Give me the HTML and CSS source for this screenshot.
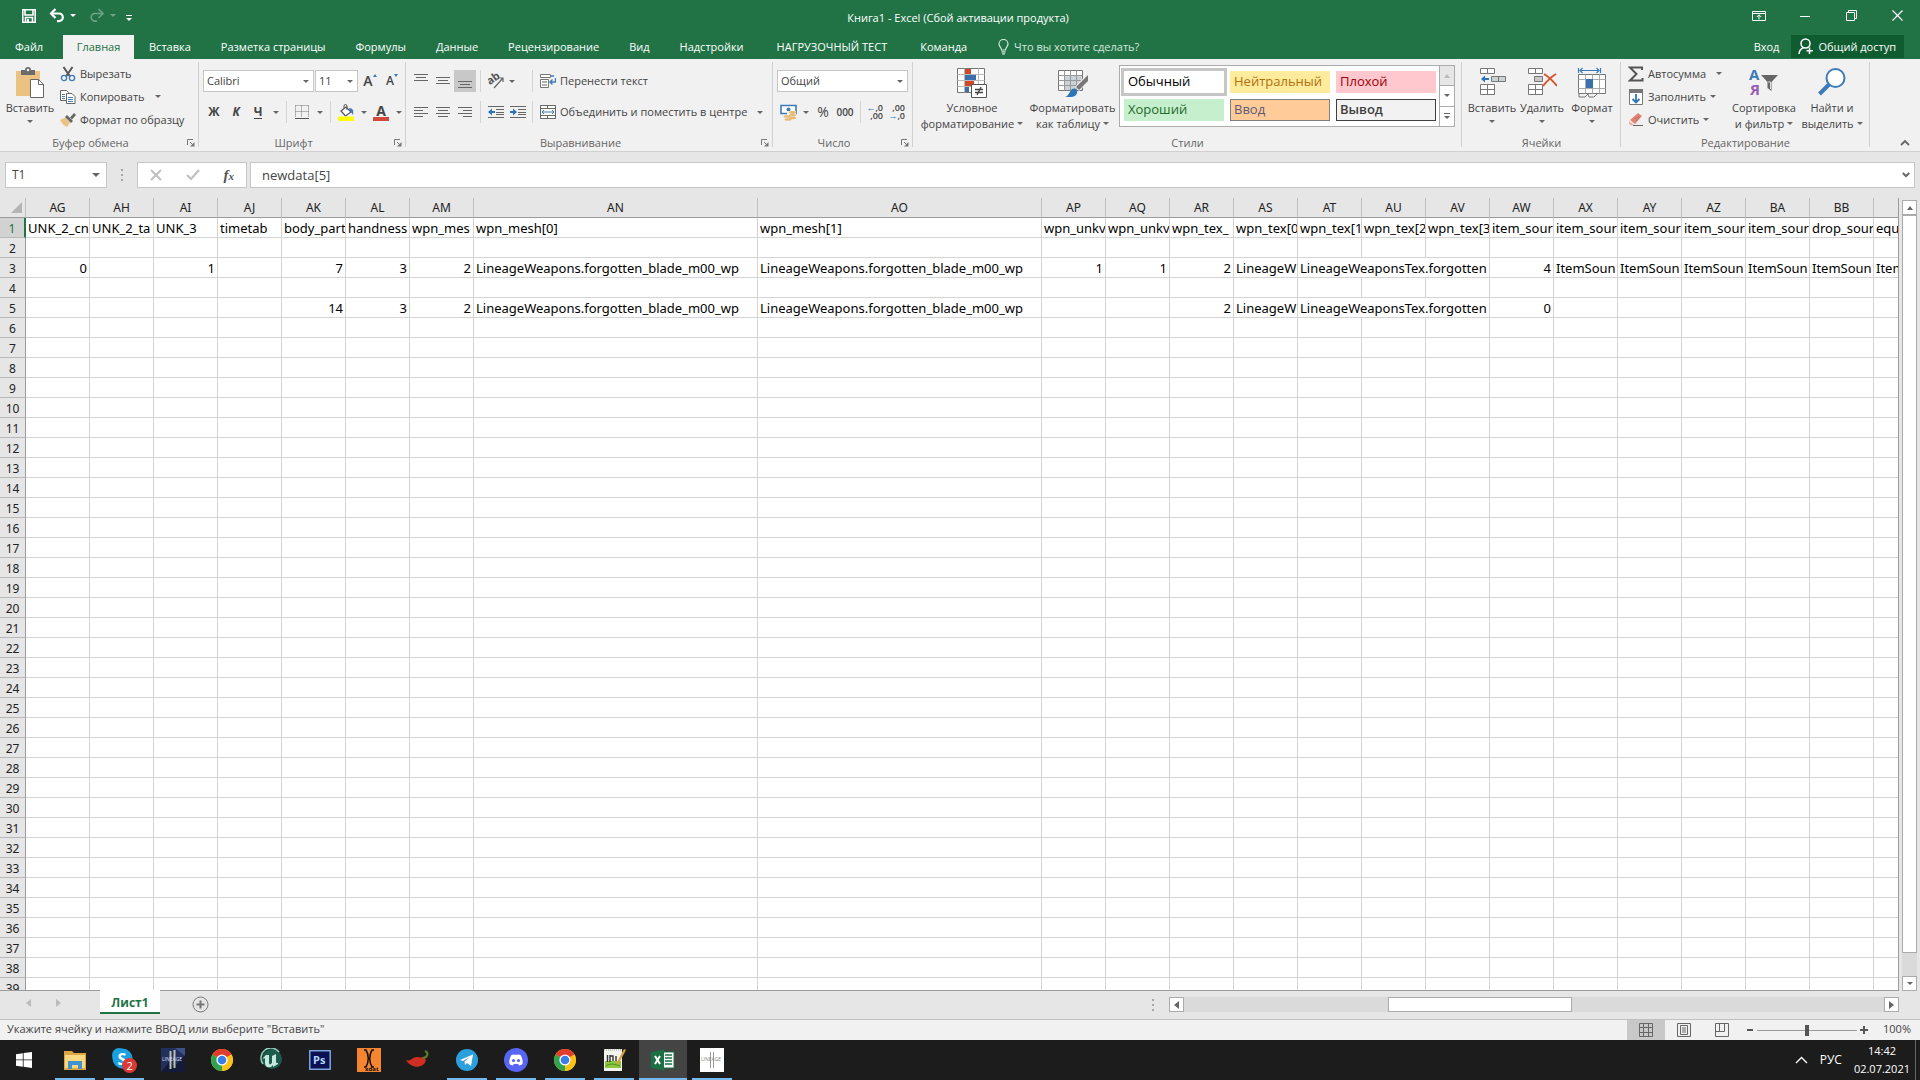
FILE: index.html
```html
<!DOCTYPE html>
<html lang="ru">
<head>
<meta charset="utf-8">
<title>Книга1 - Excel</title>
<link rel="stylesheet" href="styles.css">
</head>
<body>
<header class="titlebar">
  <div class="quick">
    <button class="qbtn" aria-label="Сохранить"><svg width="16" height="16" viewBox="0 0 16 16"><path d="M1.8 1.8h12.4v12.4H1.8z M4 2v5h8V2 M4.5 14v-4.500h7V14" fill="none" stroke="#fff" stroke-width="1.6"/><path d="M6 11h2v3H6z" fill="#fff"/></svg></button>
    <button class="qbtn" aria-label="Отменить"><svg width="16" height="16" viewBox="0 0 16 16"><path d="M2 5.500h8a3.800 3.800 0 0 1 0 7.600H8" fill="none" stroke="#fff" stroke-width="2.200"/><path d="M6.500 1L2 5.500L6.500 10" fill="none" stroke="#fff" stroke-width="2.200"/></svg></button>
    <button class="qarrow" aria-label="Список отмены"><i class="caret light"></i></button>
    <button class="qbtn dim" aria-label="Вернуть"><svg width="16" height="16" viewBox="0 0 16 16"><path d="M14 5.500H6a3.800 3.800 0 0 0 0 7.600h2" fill="none" stroke="#fff" stroke-width="1.600"/><path d="M9.500 1L14 5.500L9.500 10" fill="none" stroke="#fff" stroke-width="1.600"/></svg></button>
    <button class="qarrow dim" aria-label="Список возврата"><i class="caret light"></i></button>
    <button class="qarrow more" aria-label="Настройка панели"><i class="bar"></i><i class="caret light"></i></button>
  </div>
  <h1 class="doc-title">Книга1 - Excel (Сбой активации продукта)</h1>
  <div class="winbtns">
    <button aria-label="Параметры ленты"><svg width="14" height="12" viewBox="0 0 14 12" fill="none" stroke="#fff"><path d="M.5 1.500h13v9H.5z M.5 3.500h13 M7 9.500V5 M4.800 7L7 4.800L9.200 7"/></svg></button>
    <button aria-label="Свернуть"><svg width="10" height="10" viewBox="0 0 10 10"><path d="M0 5.500h10" stroke="#fff"/></svg></button>
    <button aria-label="Восстановить"><svg width="11" height="11" viewBox="0 0 11 11" fill="none" stroke="#fff"><path d="M.5 2.500h8v8h-8z M2.500 2.500v-2h8v8h-2"/></svg></button>
    <button aria-label="Закрыть"><svg width="11" height="11" viewBox="0 0 11 11"><path d="M.5 .5l10 10M10.500 .5l-10 10" stroke="#fff" stroke-width="1.200"/></svg></button>
  </div>
</header>

<nav class="tabs">
  <a class="tab file" href="#">Файл</a>
  <a class="tab active" href="#">Главная</a>
  <a class="tab" href="#">Вставка</a>
  <a class="tab" href="#">Разметка страницы</a>
  <a class="tab" href="#">Формулы</a>
  <a class="tab" href="#">Данные</a>
  <a class="tab" href="#">Рецензирование</a>
  <a class="tab" href="#">Вид</a>
  <a class="tab" href="#">Надстройки</a>
  <a class="tab wide" href="#">НАГРУЗОЧНЫЙ ТЕСТ</a>
  <a class="tab" href="#">Команда</a>
  <a class="tab tell" href="#"><svg width="11" height="16" viewBox="0 0 11 16" fill="none" stroke="#d7e8dd" stroke-width="1.200"><path d="M3.500 11C3.500 8.500 1 7.800 1 5a4.500 4.500 0 0 1 9 0c0 2.800-2.500 3.500-2.500 6z M3.500 12.800h4 M4 14.800h3"/></svg>Что вы хотите сделать?</a>
  <a class="tab signin" href="#">Вход</a>
  <button class="share"><svg width="16" height="17" viewBox="0 0 16 17" fill="none" stroke="#fff" stroke-width="1.500"><circle cx="7.500" cy="5.500" r="4.500"/><path d="M1 16c.3-3.500 2-5.500 4.500-6.300M11.500 9.500v6.500M8.500 12.800h6.500"/></svg>Общий доступ</button>
</nav>

<section class="ribbon">
  <div class="group g-clip">
    <div class="body">
      <button class="big paste">
        <svg width="30" height="31" viewBox="0 0 30 31"><path d="M1 4h24v25H1z" fill="#eac282"/><path d="M6 3h4a3 3 0 0 1 6 0h4v5H6z" fill="#6b6b6b"/><circle cx="13" cy="3" r="1.300" fill="#f1f1f1"/><path d="M15.500 12.500h8l5 5v13h-13z" fill="#fff" stroke="#666"/><path d="M23.500 12.500v5h5" fill="none" stroke="#666"/></svg>
        <span>Вставить</span><i class="caret"></i>
      </button>
      <div class="stack">
        <button class="small"><svg width="16" height="16" viewBox="0 0 16 16" fill="none"><path d="M3.500 1l6.500 9.500M12.500 1L6 10.500" stroke="#555" stroke-width="2"/><circle cx="4" cy="12" r="2.600" stroke="#3c7ab8" stroke-width="1.300"/><circle cx="12" cy="12" r="2.600" stroke="#3c7ab8" stroke-width="1.300"/></svg>Вырезать</button>
        <button class="small"><svg width="16" height="16" viewBox="0 0 16 16" fill="#fff" stroke="#666"><path d="M.5 1.500h6l2 2v8h-8z"/><path d="M6.500 4.500h5.500l3 3v7H6.500z"/><path d="M2 5.500h3M2 7.500h3M2 9.500h3M8 8.500h5M8 10.500h5M8 12.500h5" stroke="#4a82b8"/></svg>Копировать<i class="caret far"></i></button>
        <button class="small"><svg width="16" height="16" viewBox="0 0 16 16"><path d="M0 8l5-2.500 5 5L7 15c-3-1-5-3.500-7-7z" fill="#eac282"/><path d="M5 5l2-2 6 6-2 2z" fill="#666"/><path d="M10 5.500L14 1l2 2-4 4.500z" fill="#666"/></svg>Формат по образцу</button>
      </div>
    </div>
    <div class="foot"><span>Буфер обмена</span><button class="launch" aria-label="Параметры буфера"><svg width="8" height="8" viewBox="0 0 8 8"><path d="M.5 6V.5H6M3 3l3 3" fill="none" stroke="#777"/><path d="M7.500 3v4.500H3z" fill="#777"/></svg></button></div>
  </div>

  <div class="group g-font">
    <div class="body rows">
      <div class="row">
        <span class="combo w-font"><select aria-label="Шрифт"><option>Calibri</option></select><i class="caret"></i></span>
        <span class="combo w-size"><select aria-label="Размер"><option>11</option></select><i class="caret"></i></span>
        <button class="ib w22" aria-label="Увеличить шрифт"><b class="letter">A</b><i class="tri up"></i></button>
        <button class="ib w22" aria-label="Уменьшить шрифт"><b class="letter sm">A</b><i class="tri"></i></button>
      </div>
      <div class="row">
        <button class="ib w22"><b>Ж</b></button>
        <button class="ib w22"><b><em>К</em></b></button>
        <button class="ib w22"><b class="under">Ч</b></button>
        <button class="ib w13" aria-label="Подчеркивание"><i class="caret"></i></button>
        <i class="sep"></i>
        <button class="ib w22" aria-label="Границы"><svg width="14" height="14" viewBox="0 0 14 14" fill="none" stroke="#777"><path d="M.5 .5h13M.5 6.500h13M.5 .5v12M6.500 .5v12M13.500 .5v12" stroke-dasharray="1 1"/><path d="M0 13.500h14" stroke="#555"/></svg></button>
        <button class="ib w13" aria-label="Виды границ"><i class="caret"></i></button>
        <i class="sep"></i>
        <button class="ib w22" aria-label="Заливка"><svg width="17" height="17" viewBox="0 0 17 17"><path d="M3 7l5-4 5 5-5.500 4z" fill="#fff" stroke="#555" stroke-width="1.200"/><path d="M6 5V2a1.500 1.500 0 0 1 3 0v4" fill="none" stroke="#555"/><path d="M11 4c4 0 5 3 4 7-1-2-2-3-3-3.500z" fill="#3c7ab8"/><path d="M0 12.500h16V17H0z" fill="#ff0"/></svg></button>
        <button class="ib w13" aria-label="Цвета заливки"><i class="caret"></i></button>
        <button class="ib w22" aria-label="Цвет текста"><b class="fontcolor">A</b></button>
        <button class="ib w13" aria-label="Цвета текста"><i class="caret"></i></button>
      </div>
    </div>
    <div class="foot"><span>Шрифт</span><button class="launch" aria-label="Параметры шрифта"><svg width="8" height="8" viewBox="0 0 8 8"><path d="M.5 6V.5H6M3 3l3 3" fill="none" stroke="#777"/><path d="M7.500 3v4.500H3z" fill="#777"/></svg></button></div>
  </div>

  <div class="group g-align">
    <div class="body rows">
      <div class="row">
        <button class="ib w22" aria-label="По верхнему краю"><svg width="14" height="14" viewBox="0 0 14 14" stroke="#666"><path d="M0 .5h14M2 3.500h10M0 6.500h14"/></svg></button>
        <button class="ib w22" aria-label="По середине"><svg width="14" height="14" viewBox="0 0 14 14" stroke="#666"><path d="M0 3.500h14M2 6.500h10M0 9.500h14"/></svg></button>
        <button class="ib w22 on" aria-label="По нижнему краю"><svg width="14" height="14" viewBox="0 0 14 14" stroke="#666"><path d="M0 7.500h14M2 10.500h10M0 13.500h14"/></svg></button>
        <i class="sep"></i>
        <button class="ib w22" aria-label="Ориентация"><svg width="17" height="16" viewBox="0 0 17 16"><text x="0" y="9" font-size="11" font-weight="bold" fill="#555" transform="rotate(-35 6 8)">ab</text><path d="M6 15L15 5M11.500 5H15v4" fill="none" stroke="#666" stroke-width="1.200"/></svg></button>
        <button class="ib w10" aria-label="Виды ориентации"><i class="caret"></i></button>
        <i class="sep s2"></i>
        <button class="small txt"><svg width="16" height="16" viewBox="0 0 16 16" fill="none"><path d="M.5 1.500h10v3H.5zM.5 6.500h8v8h-8z" fill="#fff" stroke="#777"/><path d="M2 9h5M2 12h5" stroke="#666"/><path d="M11 3h3M15.500 5v4H10M12.500 6.500L10 9l2.500 2.500" stroke="#3c7ab8" stroke-width="1.400"/></svg>Перенести текст</button>
      </div>
      <div class="row">
        <button class="ib w22" aria-label="По левому краю"><svg width="14" height="12" viewBox="0 0 14 12" stroke="#666"><path d="M0 1.500h14M0 4.500h9M0 7.500h14M0 10.500h9"/></svg></button>
        <button class="ib w22" aria-label="По центру"><svg width="14" height="12" viewBox="0 0 14 12" stroke="#666"><path d="M0 1.500h14M2 4.500h10M0 7.500h14M2 10.500h10"/></svg></button>
        <button class="ib w22" aria-label="По правому краю"><svg width="14" height="12" viewBox="0 0 14 12" stroke="#666"><path d="M0 1.500h14M5 4.500h9M0 7.500h14M5 10.500h9"/></svg></button>
        <i class="sep"></i>
        <button class="ib w22" aria-label="Уменьшить отступ"><svg width="16" height="14" viewBox="0 0 16 14"><path d="M0 1.500h16M8 4.500h8M8 7.500h8M8 9.500h8M0 12.500h16" stroke="#666"/><path d="M0 7l4-3.500V6h3v2H4v2.500z" fill="#2e75b6"/></svg></button>
        <button class="ib w22" aria-label="Увеличить отступ"><svg width="16" height="14" viewBox="0 0 16 14"><path d="M0 1.500h16M8 4.500h8M8 7.500h8M8 9.500h8M0 12.500h16" stroke="#666"/><path d="M7 7L3 3.500V6H0v2h3v2.500z" fill="#2e75b6"/></svg></button>
        <i class="sep s3"></i>
        <button class="small txt"><svg width="16" height="16" viewBox="0 0 16 16" fill="none"><path d="M.5 1.500h15v13H.5z" fill="#fff" stroke="#666"/><path d="M.5 4.500h15M.5 11.500h15M7.500 1v3M7.500 12v3" stroke="#666"/><path d="M2 8h12M4 6L2 8l2 2M12 6l2 2-2 2" stroke="#3c7ab8"/></svg>Объединить и поместить в центре<i class="caret far"></i></button>
      </div>
    </div>
    <div class="foot"><span>Выравнивание</span><button class="launch" aria-label="Параметры выравнивания"><svg width="8" height="8" viewBox="0 0 8 8"><path d="M.5 6V.5H6M3 3l3 3" fill="none" stroke="#777"/><path d="M7.500 3v4.500H3z" fill="#777"/></svg></button></div>
  </div>

  <div class="group g-num">
    <div class="body rows">
      <div class="row"><span class="combo w-num"><select aria-label="Числовой формат"><option>Общий</option></select><i class="caret"></i></span></div>
      <div class="row">
        <button class="ib w22" aria-label="Финансовый формат"><svg width="17" height="17" viewBox="0 0 17 17"><path d="M1 1.500h15v8H1z" fill="#fff" stroke="#3c7ab8" stroke-width="1.600"/><circle cx="8.500" cy="5.500" r="2" fill="#3c7ab8"/><path d="M7 7h9v9H4v-4h3z" fill="#f1f1f1"/><g fill="#eab970"><ellipse cx="12.500" cy="8.500" rx="3.500" ry="1.400"/><ellipse cx="12.500" cy="11.300" rx="3.500" ry="1.200"/><ellipse cx="12.500" cy="14" rx="3.500" ry="1.200"/><ellipse cx="7" cy="12.500" rx="3.300" ry="1.200"/><ellipse cx="8" cy="15.500" rx="3.500" ry="1.200"/></g></svg></button>
        <button class="ib w13" aria-label="Виды валют"><i class="caret"></i></button>
        <button class="ib w22 pct">%</button>
        <button class="ib w22 tiny">000</button>
        <i class="sep"></i>
        <button class="ib w22 dec" aria-label="Увеличить разрядность"><span><i>←</i>,0</span><span>,00</span></button>
        <button class="ib w22 dec" aria-label="Уменьшить разрядность"><span>,00</span><span><i>→</i>,0</span></button>
      </div>
    </div>
    <div class="foot"><span>Число</span><button class="launch" aria-label="Параметры числа"><svg width="8" height="8" viewBox="0 0 8 8"><path d="M.5 6V.5H6M3 3l3 3" fill="none" stroke="#777"/><path d="M7.500 3v4.500H3z" fill="#777"/></svg></button></div>
  </div>

  <div class="group g-style">
    <div class="body">
      <button class="big w-cond">
        <svg width="30" height="31" viewBox="0 0 30 31"><path d="M.5 1.500h27v24H.5z" fill="#fff" stroke="#777"/><path d="M.5 7.500h27M.5 13.500h27M.5 19.500h27M7.500 1.500v24M21.500 1.500v24" stroke="#bbb" fill="none"/><path d="M8 2h6v5H8zM8 14h9v5H8z" fill="#d24726"/><path d="M8 8h11v5H8zM8 20h4v5H8z" fill="#3c6fae"/><path d="M14.500 17.500h15v13h-15z" fill="#fff" stroke="#555"/><path d="M18 22.500h8M18 25.500h8M24 20l-4 8" stroke="#444" stroke-width="1.300"/></svg>
        <span>Условное<br>форматирование<i class="caret"></i></span>
      </button>
      <button class="big w-tbl">
        <svg width="30" height="31" viewBox="0 0 30 31"><path d="M.5 3.500h24v20H.5z" fill="#fff" stroke="#777"/><path d="M7 9h17v14H7z" fill="#c9d3d5"/><path d="M.5 8.500h24M.5 13.500h24M.5 18.500h24M6.500 3.500v20M12.500 3.500v20M18.500 3.500v20" stroke="#999" fill="none"/><path d="M30 6v9L21 24l-4-4z" fill="#f1f1f1"/><path d="M30 8v6L21 23l-3-3z" fill="#777"/><path d="M7 30c4-1 4-5 7-8 2-1 4-.5 5 1 1 3-1 7-6 7z" fill="#2e75b6"/></svg>
        <span>Форматировать<br>как таблицу<i class="caret"></i></span>
      </button>
      <div class="gallery">
        <div class="cells">
          <button class="sc normal">Обычный</button><button class="sc neutral">Нейтральный</button><button class="sc bad">Плохой</button>
          <button class="sc good">Хороший</button><button class="sc input">Ввод</button><button class="sc output">Вывод</button>
        </div>
        <div class="gscroll">
          <button class="off" aria-label="Вверх"><i class="caret up"></i></button>
          <button aria-label="Вниз"><i class="caret"></i></button>
          <button aria-label="Ещё"><i class="bar dark"></i><i class="caret"></i></button>
        </div>
      </div>
    </div>
    <div class="foot"><span>Стили</span></div>
  </div>

  <div class="group g-cells">
    <div class="body">
      <button class="big w50"><svg width="30" height="31" viewBox="0 0 30 31" fill="#fff" stroke="#777"><path d="M3.500 1.500h14v5h-14zM10.500 1.500v5M3.500 17.500h14v10h-14zM3.500 22.500h14M10.500 17.500v10"/><path d="M14.500 9.500h14v5h-14zM21.500 9.500v5" fill="#c9d3d5"/><path d="M4 12l4-3.500V11h4v2H8v2.500z" fill="#2e75b6" stroke="none"/></svg><span>Вставить</span><i class="caret"></i></button>
      <button class="big w50"><svg width="30" height="31" viewBox="0 0 30 31" fill="#fff" stroke="#777"><path d="M1.500 1.500h14v5h-14zM8.500 1.500v5M1.500 17.500h14v10h-14zM1.500 22.500h14M8.500 17.500v10"/><path d="M7.500 9.500h8v5h-8z" fill="#c8c8c8"/><path d="M17 7c5 3 9 7 13 12M29 7c-5 3-9 7-13 12" fill="none" stroke="#d9532c" stroke-width="2"/></svg><span>Удалить</span><i class="caret"></i></button>
      <button class="big w50"><svg width="30" height="31" viewBox="0 0 30 31" fill="none"><path d="M1.500 7.500h27v19h-27z" fill="#fff" stroke="#777"/><path d="M1.500 12.500h27M1.500 21.500h27M8.500 7.500v19M15.500 7.500v19M22.500 7.500v19" stroke="#aaa"/><path d="M9 12h7v9H9z" fill="#3c6fae"/><path d="M2 27v3h6l3-3 1 3h5l3-3" stroke="#777"/><path d="M1.500 1v5M23.500 1v5M3 3.500h19M5.500 1L3 3.500L5.500 6M19.500 1L22 3.500L19.500 6" stroke="#3c7ab8" stroke-width="1.200"/></svg><span>Формат</span><i class="caret"></i></button>
    </div>
    <div class="foot"><span>Ячейки</span></div>
  </div>

  <div class="group g-edit">
    <div class="body">
      <div class="stack">
        <button class="small"><svg width="16" height="16" viewBox="0 0 16 16"><path d="M14 4V1.500H2L8.500 8 2 14.500h12.500V12" fill="none" stroke="#555" stroke-width="2"/></svg>Автосумма<i class="caret far"></i></button>
        <button class="small"><svg width="16" height="16" viewBox="0 0 16 16" fill="none"><path d="M1.500 2.500h13v13h-13z" fill="#fff" stroke="#777"/><path d="M1 0h14v4H1z" fill="#777"/><path d="M8 5v9M4.500 10L8 13.500L11.500 10" stroke="#2e75b6" stroke-width="1.800"/></svg>Заполнить<i class="caret"></i></button>
        <button class="small"><svg width="16" height="16" viewBox="0 0 16 16"><path d="M2 8l8-7 4 3-7 8z" fill="#e08474"/><path d="M1 9l5 4-3 .5L1 12z" fill="#f0b0a4"/><path d="M5 13.500h10" stroke="#666"/><path d="M7 7l4-3M8 9l4-4" stroke="#b55a4c" stroke-dasharray="1 1"/></svg>Очистить<i class="caret"></i></button>
      </div>
      <button class="big w-sort"><svg width="30" height="31" viewBox="0 0 30 31"><text x="0" y="13" font-size="15" font-weight="bold" fill="#3c7ab8">А</text><text x="1" y="28" font-size="15" font-weight="bold" fill="#9a5cb4">Я</text><path d="M12 8h17l-6.500 7v9l-4-3v-6z" fill="#666"/><path d="M19 15h2.500v7" fill="none" stroke="#ddd"/></svg><span>Сортировка<br>и фильтр<i class="caret"></i></span></button>
      <button class="big w-find"><svg width="30" height="31" viewBox="0 0 30 31"><circle cx="18.500" cy="11" r="9" fill="#fff" stroke="#3c7ab8" stroke-width="2"/><path d="M12 17.500L2.500 27" stroke="#3c7ab8" stroke-width="4"/></svg><span>Найти и<br>выделить<i class="caret"></i></span></button>
    </div>
    <div class="foot"><span>Редактирование</span></div>
  </div>
  <button class="collapse" aria-label="Свернуть ленту"><svg width="10" height="8" viewBox="0 0 10 8"><path d="M1 6l4-4 4 4" fill="none" stroke="#666" stroke-width="1.800"/></svg></button>
</section>

<section class="formula">
  <div class="namebox"><input aria-label="Имя" value="T1"><button aria-label="Список имён"><i class="caret big-c"></i></button></div>
  <i class="grip"></i>
  <div class="fbtns">
    <button aria-label="Отмена"><svg width="12" height="12" viewBox="0 0 12 12"><path d="M1 1l10 10M11 1L1 11" stroke="#c0c0c0" stroke-width="2"/></svg></button>
    <button aria-label="Ввод"><svg width="14" height="12" viewBox="0 0 14 12"><path d="M1 6l4 4L13 1" fill="none" stroke="#c0c0c0" stroke-width="2.200"/></svg></button>
    <button class="fx">f<small>x</small></button>
  </div>
  <div class="fline"><input aria-label="Строка формул" value="newdata[5]"><button aria-label="Развернуть"><svg width="8" height="6" viewBox="0 0 8 6"><path d="M.8 1L4 4.200L7.200 1" fill="none" stroke="#666" stroke-width="2"/></svg></button></div>
</section>

<main class="sheet">
  <div class="gridwrap"><table class="grid" id="grid"></table></div>
  <div class="vscroll">
    <button aria-label="Прокрутить вверх"><i class="caret up"></i></button>
    <div class="vtrack"><div class="vthumb"></div></div>
    <button aria-label="Прокрутить вниз"><i class="caret"></i></button>
  </div>
</main>

<section class="sheetbar">
  <div class="sheetnav"><button aria-label="Предыдущий лист"><svg width="5" height="8" viewBox="0 0 5 8"><path d="M5 0v8L0 4z" fill="#bbb"/></svg></button><button aria-label="Следующий лист"><svg width="5" height="8" viewBox="0 0 5 8"><path d="M0 0v8l5-4z" fill="#bbb"/></svg></button></div>
  <a class="sheettab" href="#">Лист1</a>
  <button class="addsheet" aria-label="Новый лист"><svg width="17" height="17" viewBox="0 0 17 17" fill="none" stroke="#777"><circle cx="8.500" cy="8.500" r="7.500"/><path d="M8.500 4.500v8M4.500 8.500h8" stroke-width="2"/></svg></button>
  <i class="grip hgrip"></i>
  <div class="hscroll">
    <button aria-label="Прокрутить влево"><svg width="5" height="8" viewBox="0 0 5 8"><path d="M5 0v8L0 4z" fill="#666"/></svg></button>
    <div class="htrack"><div class="hthumb"></div></div>
    <button aria-label="Прокрутить вправо"><svg width="5" height="8" viewBox="0 0 5 8"><path d="M0 0v8l5-4z" fill="#666"/></svg></button>
  </div>
</section>

<footer class="status">
  <span class="msg">Укажите ячейку и нажмите ВВОД или выберите "Вставить"</span>
  <button class="view on" aria-label="Обычный"><svg width="14" height="14" viewBox="0 0 14 14" fill="none" stroke="#666"><path d="M.5 .5h13v13H.5zM.5 4.500h13M.5 9.500h13M4.500 .5v13M9.500 .5v13"/></svg></button>
  <button class="view" aria-label="Разметка страницы"><svg width="14" height="14" viewBox="0 0 14 14" fill="none" stroke="#666"><path d="M.5 .5h13v13H.5zM3.500 2.500h7v9h-7zM5 5h4M5 7h4M5 9h4"/></svg></button>
  <button class="view" aria-label="Страничный режим"><svg width="14" height="14" viewBox="0 0 14 14" fill="none" stroke="#666"><path d="M.5 .5h13v13H.5zM4.500 .5v8M9.500 .5v8M.5 8.500h9"/></svg></button>
  <button class="zb" aria-label="Уменьшить"><svg width="8" height="8" viewBox="0 0 8 8"><path d="M1 4h6" stroke="#555" stroke-width="2"/></svg></button>
  <input class="zoom" type="range" min="0" max="100" value="50" aria-label="Масштаб">
  <button class="zb" aria-label="Увеличить"><svg width="8" height="8" viewBox="0 0 8 8"><path d="M0 4h8M4 0v8" stroke="#555" stroke-width="2"/></svg></button>
  <span class="pct100">100%</span>
</footer>

<nav class="taskbar">
  <button class="tk start" aria-label="Пуск"><svg width="16" height="16" viewBox="0 0 16 16" fill="#fff"><path d="M0 2.200L6.800 1.200v6.300H0zM7.600 1.100L16 0v7.500H7.600zM0 8.300h6.800v6.400L0 13.800zM7.600 8.300H16V16l-8.400-1.200z"/></svg></button>
  <button class="tk run" aria-label="Проводник"><svg width="24" height="24" viewBox="0 0 24 24"><path d="M1 3h8l2 2h12v17H1z" fill="#dba544"/><path d="M2 7h20v13H2z" fill="#f8d982"/><path d="M5 13h14v8h-4v-4H9v4H5z" fill="#3f93d0"/></svg></button>
  <button class="tk run" aria-label="Skype"><svg width="26" height="26" viewBox="0 0 26 26"><circle cx="8" cy="8" r="7" fill="#1aa0e0"/><circle cx="11.500" cy="11.500" r="10" fill="#1aa0e0"/><circle cx="15" cy="15" r="7" fill="#1aa0e0"/><text x="6.500" y="17.500" font-size="16" font-weight="bold" fill="#fff">S</text><circle cx="18.500" cy="18.500" r="7.500" fill="#d93a34"/><text x="15.500" y="22.500" font-size="11" fill="#fff">2</text></svg></button>
  <button class="tk" aria-label="Lineage"><svg width="24" height="24" viewBox="0 0 24 24"><path d="M0 0h24v24H0z" fill="#22305e"/><path d="M0 24L8 14l5 5 11-12v17z" fill="#141b3a"/><path d="M14 0h10v8z" fill="#3d5089"/><path d="M9.500 3v18M13.500 2v18" stroke="#b9bfae" stroke-width="2"/><text x="1" y="13" font-size="5" fill="#dde">LINEAGE</text></svg></button>
  <button class="tk" aria-label="Chrome"><svg width="24" height="24" viewBox="0 0 24 24"><circle cx="12" cy="12" r="11" fill="#fbc116"/><path d="M12 12L2.500 6.500a11 11 0 0 1 19 0z" fill="#e33b2e"/><path d="M12 12v11A11 11 0 0 1 2.500 6.500z" fill="#31a350"/><path d="M12 12l9.500-5.500a11 11 0 0 1-9.500 16.500z" fill="#fbc116"/><circle cx="12" cy="12" r="5.600" fill="#fff"/><circle cx="12" cy="12" r="4.300" fill="#3b7de8"/></svg></button>
  <button class="tk" aria-label="Unreal"><svg width="24" height="24" viewBox="0 0 24 24"><circle cx="13" cy="11" r="10" fill="#1d5b4c"/><path d="M4 16A10 10 0 0 1 20 4" fill="none" stroke="#8fd0bd" stroke-width="1.500"/><path d="M7 7l-3 3c0 1 1 1 2 0v5c0 4 3 5 6 4l2-2v2l5-3v-1c-2 0-2 0-2-2V6l-4 2v7c-2 2-3 2-3-1V7z" fill="#c7e8dc"/></svg></button>
  <button class="tk" aria-label="Photoshop"><svg width="22" height="20" viewBox="0 0 22 20"><path d="M.8 .8h20.400v18.400H.8z" fill="#0a1154" stroke="#7ea6dc" stroke-width="1.500"/><text x="4" y="14" font-size="11" font-weight="bold" fill="#b5d4fb">Ps</text></svg></button>
  <button class="tk" aria-label="Xdat"><svg width="24" height="24" viewBox="0 0 24 24"><path d="M0 0h24v24H0z" fill="#f5852e"/><path d="M7 2h2c3 5 3 12 0 17H7M17 2h-2c-3 5-3 12 0 17h2" fill="none" stroke="#111" stroke-width="1.500"/><text x="8" y="23" font-size="6" font-weight="bold" fill="#111">xdat</text></svg></button>
  <button class="tk" aria-label="Перец"><svg width="24" height="24" viewBox="0 0 24 24"><path d="M0 12c5 2 6-3 11-3 2 0 3 1 5 0 4 0 5 4 2 7-5 5-14 3-18-4z" fill="#cf2f22"/><path d="M17 10c5-1 6-5 2-7" fill="none" stroke="#5d7c2d" stroke-width="2"/></svg></button>
  <button class="tk run" aria-label="Telegram"><svg width="22" height="22" viewBox="0 0 22 22"><circle cx="11" cy="11" r="11" fill="#2ca0dc"/><path d="M4 11l13-5.500L15 17l-4-3-2 2-.500-3.500L14 8l-7 4z" fill="#fff"/></svg></button>
  <button class="tk run" aria-label="Discord"><svg width="24" height="24" viewBox="0 0 24 24"><circle cx="12" cy="12" r="12" fill="#5865f2"/><path d="M7.500 7C9 6.300 10 6.200 10.300 6.800h3.400c.3-.6 1.300-.5 2.800.2C18.500 10 19 13 18.500 16c-1.500 1-2.500 1.300-3.500 1.500l-.8-1.500H9.800L9 17.500C8 17.300 7 17 5.500 16 5 13 5.500 10 7.500 7z" fill="#fff"/><circle cx="9.500" cy="12.500" r="1.600" fill="#5865f2"/><circle cx="14.500" cy="12.500" r="1.600" fill="#5865f2"/></svg></button>
  <button class="tk run" aria-label="Chrome"><svg width="24" height="24" viewBox="0 0 24 24"><circle cx="12" cy="12" r="11" fill="#fbc116"/><path d="M12 12L2.500 6.500a11 11 0 0 1 19 0z" fill="#e33b2e"/><path d="M12 12v11A11 11 0 0 1 2.500 6.500z" fill="#31a350"/><path d="M12 12l9.500-5.500a11 11 0 0 1-9.500 16.500z" fill="#fbc116"/><circle cx="12" cy="12" r="5.600" fill="#fff"/><circle cx="12" cy="12" r="4.300" fill="#3b7de8"/></svg></button>
  <button class="tk run" aria-label="Notepad++"><svg width="24" height="24" viewBox="0 0 24 24"><path d="M2 1h18v22H2z" fill="#f4f4ee"/><path d="M3 13h16v7H3z" fill="#8cc63c"/><path d="M5.500 7v7M8 7v7M8 8h3v5M14 8v5" stroke="#333" stroke-width="1.400" fill="none"/><path d="M4 18c4-3 9-2 14 0" stroke="#4f8a1c" fill="none"/><path d="M2 2h18" stroke="#999" stroke-dasharray="1 1"/><path d="M22 1l2 1-7 13-2 2v-3z" fill="#d9a13a"/></svg></button>
  <button class="tk run current" aria-label="Excel"><svg width="24" height="22" viewBox="0 0 24 22"><path d="M11 3h12v16H11z" fill="#fff" stroke="#1d7044"/><path d="M14 6h7M14 9h7M14 12h7M14 15h7" stroke="#1d7044" stroke-width="1.500"/><path d="M0 3l13-2.500v21L0 19z" fill="#1d7044"/><path d="M4 7l5 8M9 7l-5 8" stroke="#fff" stroke-width="2"/></svg></button>
  <button class="tk run" aria-label="L2"><svg width="24" height="24" viewBox="0 0 24 24"><path d="M0 0h24v24H0z" fill="#fff"/><path d="M10.500 4v16M13.500 4v16" stroke="#999"/><text x="1" y="13" font-size="5" fill="#888">LINEAGE</text></svg></button>
  <div class="tray">
    <button class="up" aria-label="Скрытые значки"><svg width="13" height="8" viewBox="0 0 13 8"><path d="M1 7l5.500-5.500L12 7" fill="none" stroke="#fff" stroke-width="1.400"/></svg></button>
    <span class="lang">РУС</span>
    <div class="clock"><span>14:42</span><span>02.07.2021</span></div>
    <i class="peek"></i>
  </div>
</nav>
<script src="grid.js"></script>
</body>
</html>
```
FILE: styles.css
```css
* { box-sizing: border-box; }
body {
  margin: 0;
  height: 100vh;
  display: flex;
  flex-direction: column;
  overflow: hidden;
  background: #e6e6e6;
  color: #444;
  font: 11px/16px "Open Sans", "Noto Sans", sans-serif;
}
button, input, select { font: inherit; color: inherit; border: 0; padding: 0; margin: 0; background: none; border-radius: 0; outline: 0; }
button { white-space: nowrap; }
svg { display: block; flex: none; }
svg text { font-family: "Open Sans", sans-serif; }
a { color: inherit; text-decoration: none; }

.caret { display: inline-block; flex: none; width: 0; height: 0; border: 3px solid transparent; border-top-color: #666; border-bottom-width: 0; }
.caret.up { border-top-width: 0; border-bottom: 4px solid #666; }
.caret.light { border-top-color: #fff; }
.caret.big-c { display: block; border-width: 4px 4px 0; }
.bar { display: block; width: 6px; height: 1px; margin-bottom: 2px; background: #fff; }
.bar.dark { background: #666; }

/* title bar */
.titlebar { flex: none; display: grid; grid-template-columns: 1fr auto 1fr; height: 35px; background: #217346; color: #fff; }
.quick { display: flex; align-items: center; padding: 0 0 5px 21px; }
.qbtn { width: 16px; margin-right: 12px; }
.qarrow { display: flex; flex-direction: column; align-items: center; width: 8px; margin: 0 12px 0 -8px; }
.qarrow.dim { margin-right: 8px; }
.qarrow.more { margin: 4px 0 0; }
.dim { opacity: .35; }
.doc-title { margin: 0; padding-right: 4px; font-size: 11px; font-weight: 400; line-height: 36px; }
.winbtns { display: flex; justify-content: flex-end; padding: 0 0 5px; }
.winbtns button { display: flex; align-items: center; justify-content: center; width: 46px; }

/* tab strip */
.tabs { flex: none; display: flex; height: 24px; background: #217346; color: #fff; }
.tab { display: flex; align-items: center; gap: 5px; padding: 0 15px; white-space: nowrap; }
.tab.file { width: 63px; }
.tab.active { width: 71px; justify-content: center; background: #f1f1f1; color: #217346; }
.tab.wide { padding: 0 18px; }
.tab.tell { color: #d7e8dd; padding: 0 16px; }
.tab.signin { margin-left: auto; padding: 0 12px; }
.share { display: flex; align-items: center; gap: 4px; height: 23px; padding: 0 8px 0 7px; margin-right: 16px; background: #0e5c2f; color: #fff; }

/* ribbon */
.ribbon { flex: none; display: flex; height: 93px; background: #f1f1f1; border-bottom: 1px solid #d0d0d0; }
.group { flex: none; display: flex; flex-direction: column; background: linear-gradient(#d0d0d0, #d0d0d0) no-repeat right top 3px / 1px 85px; }
.g-clip { width: 199px; }
.g-font { width: 207px; }
.g-align { width: 367px; }
.g-num { width: 140px; }
.g-style { width: 549px; }
.g-cells { width: 159px; }
.g-edit { width: 249px; }
.body { display: flex; height: 76px; }
.foot { display: flex; height: 16px; text-align: center; color: #666; }
.foot span { flex: 1; }
.launch { width: 18px; display: flex; align-items: center; padding-left: 6px; }
.big { display: flex; flex-direction: column; align-items: center; padding-top: 8px; text-align: center; }
.big svg { margin-bottom: 2px; }
.big .caret { margin-left: 3px; vertical-align: 3px; }
.big > .caret { margin: 4px 0 0; }
.paste { width: 60px; }
.stack { display: flex; flex-direction: column; padding-top: 3px; }
.small { display: flex; align-items: center; gap: 4px; height: 23px; }
.small .caret.far { margin-left: 6px; }
.rows { flex-direction: column; gap: 9px; padding: 11px 0 0 4px; }
.row { display: flex; height: 22px; }
.ib { display: flex; align-items: center; justify-content: center; font-size: 12px; flex: none; }
.ib.on { background: #c8c8c8; }
.w10 { width: 10px; }
.w13 { width: 13px; }
.w22 { width: 22px; }
.sep { width: 1px; margin: 0 4px; background: #d4d4d4; }
.sep.s2 { margin: 0 7px 0 15px; }
.sep.s3 { margin: 0 7px 0 3px; }
.letter { font-size: 14px; font-weight: 600; }
.letter.sm { font-size: 12px; }
.tri { align-self: flex-start; margin-top: 4px; border: 2px solid transparent; border-top: 3px solid #3c7ab8; border-bottom: 0; }
.tri.up { border-top: 0; border-bottom: 3px solid #3c7ab8; }
.under { border-bottom: 1px solid #444; line-height: 12px; }
.fontcolor { width: 16px; height: 17px; border-bottom: 4px solid #d24a3c; font-size: 14px; line-height: 13px; text-align: center; }
.combo { display: flex; align-items: center; padding: 0 4px 0 3px; margin-right: 1px; background: #fff; border: 1px solid #c6c6c6; }
.combo select { appearance: none; flex: 1; min-width: 0; }
.w-font { width: 111px; }
.w-size { width: 43px; }
.w-num { width: 131px; }
.small.txt { height: 22px; }
.pct { font-size: 14px; }
.tiny { font-size: 10px; font-weight: 600; }
.dec { flex-direction: column; align-items: flex-end; padding-right: 4px; font-size: 9px; font-weight: 600; line-height: 8px; }
.dec i { color: #2e75b6; font-style: normal; }

.w-cond { width: 118px; }
.w-tbl { width: 83px; }
.w50 { width: 50px; }
.w-sort { width: 68px; margin-left: 8px; }
.w-find { width: 68px; }
.g-cells .body { padding-left: 5px; }
.g-edit .stack { padding-left: 7px; width: 101px; }
.gallery { display: flex; height: 62px; margin: 6px 0 0 5px; border: 1px solid #ababab; background: #fff; }
.cells { display: grid; grid-template-columns: 100px 100px 100px; grid-auto-rows: 22px; gap: 6px; padding: 5px 3px 0 4px; width: 319px; }
.sc { text-align: left; padding: 0 0 2px 4px; font-size: 13px; line-height: 18px; }
.normal { color: #000; outline: 3px solid #c6c6c6; }
.neutral { background: #ffeb9c; color: #b0700c; }
.bad { background: #ffc7ce; color: #9c0006; }
.good { background: #c6efce; color: #1e6b2a; }
.input { background: #ffcc99; color: #5a5a76; border: 1px solid #7f7f7f; padding-left: 3px; }
.output { background: #f2f2f2; color: #3f3f3f; border: 1px solid #3f3f3f; padding-left: 3px; font-weight: 600; }
.gscroll { display: flex; flex-direction: column; width: 15px; border-left: 1px solid #ababab; }
.gscroll button { flex: 1; display: flex; flex-direction: column; align-items: center; justify-content: center; }
.gscroll button + button { border-top: 1px solid #ababab; }
.gscroll .off { background: #e6e6e6; }
.gscroll .off .caret { border-bottom-color: #bbb; }
.collapse { align-self: flex-end; margin: 0 10px 4px auto; }

/* formula bar */
.formula { flex: none; display: flex; align-items: center; height: 46px; padding: 0 5px; }
.namebox, .fbtns, .fline { display: flex; align-items: center; height: 26px; background: #fff; border: 1px solid #c6c6c6; }
.namebox { width: 102px; padding: 0 6px; }
.namebox input { flex: 1; min-width: 0; font-size: 12px; }
.grip { width: 2px; height: 12px; margin: 0 14px; background: repeating-linear-gradient(#a6a6a6 0 2px, transparent 2px 5px); }
.fbtns { width: 110px; justify-content: space-between; padding: 0 12px; }
.fx { font: italic bold 15px/20px "Liberation Serif", serif; color: #555; }
.fx small { font-size: 11px; }
.fline { flex: 1; margin-left: 3px; padding: 0 4px 0 11px; }
.fline input { flex: 1; font-size: 13px; }

/* worksheet */
.sheet { flex: 1; min-height: 0; display: flex; }
.gridwrap { flex: 1; min-width: 0; overflow: hidden; border: solid #9b9b9b; border-width: 0 1px 1px 0; }
.grid { table-layout: fixed; width: 0; border-collapse: separate; border-spacing: 0; font: 13px/17px "Noto Sans", sans-serif; color: #000; background: #fff; }
.grid th { height: 20px; padding: 2px 0 0; font-weight: 400; font-size: 12px; background: #e6e6e6; color: #222; border: solid #9b9b9b; border-width: 0 1px 1px 0; }
.grid thead th { padding: 0; border-right-color: #c0c0c0; line-height: 19px; }
.grid tbody th { border-bottom-color: #b8b8b8; }
.grid tbody th.sel { background: #d2d2d2; color: #217346; border-right: 2px solid #217346; }
.grid td { height: 20px; padding: 2px 2px 0; overflow: hidden; white-space: nowrap; border: solid #d4d4d4; border-width: 0 1px 1px 0; }
.grid td.num { text-align: right; }
.corner svg { margin: 0 3px 0 auto; }
.vscroll { flex: none; display: flex; flex-direction: column; width: 21px; padding: 2px 3px 0; }
.vscroll button, .hscroll button { flex: none; display: flex; align-items: center; justify-content: center; width: 15px; height: 15px; background: #fff; border: 1px solid #ababab; }
.vtrack { flex: 1; background: #dadada; }
.vthumb { width: 15px; height: 97%; background: #fff; border: 1px solid #ababab; }

/* sheet tabs */
.sheetbar { flex: none; display: flex; height: 28px; }
.sheetnav { display: flex; width: 100px; padding: 0 39px 4px 26px; justify-content: space-between; }
.sheettab { width: 60px; height: 24px; margin-top: -1px; background: #fff; border-bottom: 2px solid #217346; color: #217346; font-size: 12px; font-weight: 700; line-height: 25px; text-align: center; }
.addsheet { margin: 0 auto 1px 32px; }
.hgrip { margin: 8px 15px 0; }
.hscroll { display: flex; width: 730px; margin: 6px 21px 0 0; }
.htrack { flex: 1; height: 15px; padding-left: 204px; background: #dadada; }
.hthumb { width: 184px; height: 15px; background: #fff; border: 1px solid #ababab; }

/* status bar */
.status { flex: none; display: flex; align-items: center; height: 21px; padding: 0 9px 0 7px; background: #f1f1f1; border-top: 1px solid #c0c0c0; }
.msg { margin-right: auto; padding-bottom: 2px; }
.view { display: flex; align-items: center; justify-content: center; width: 38px; height: 20px; }
.view.on { background: #c8c8c8; }
.zb { width: 8px; }
.view + .zb { margin-left: 5px; }
.zoom { appearance: none; width: 100px; height: 20px; margin: 0 3px; background: linear-gradient(#9a9a9a, #9a9a9a) no-repeat center / 100% 1px; }
.zoom::-webkit-slider-thumb { appearance: none; width: 4px; height: 11px; background: #555; }
.pct100 { margin-left: 15px; padding-bottom: 2px; }

/* taskbar */
.taskbar { flex: none; display: flex; height: 40px; background: #1c1c1c; color: #fff; }
.tk { display: flex; align-items: center; justify-content: center; width: 48px; margin-right: 1px; }
.tk.start { margin-right: 3px; }
.tk.run { background: linear-gradient(#76b9ed, #76b9ed) no-repeat center bottom / 40px 2px; }
.tk.current { background: linear-gradient(#76b9ed, #76b9ed) no-repeat center bottom / 48px 2px #444; }
.tray { display: flex; align-items: center; margin-left: auto; gap: 12px; font-size: 12px; }
.clock { display: flex; flex-direction: column; align-items: center; line-height: 18px; font-size: 11px; }
.peek { width: 5px; height: 40px; margin-left: -7px; border-left: 1px solid #666; }
```
FILE: grid.js
```
// Visible columns: letter and width in pixels.
const columns = [
  ['AG', 64], ['AH', 64], ['AI', 64], ['AJ', 64], ['AK', 64], ['AL', 64], ['AM', 64],
  ['AN', 284], ['AO', 284], ['AP', 64], ['AQ', 64], ['AR', 64], ['AS', 64], ['AT', 64],
  ['AU', 64], ['AV', 64], ['AW', 64], ['AX', 64], ['AY', 64], ['AZ', 64], ['BA', 64],
  ['BB', 64], ['', 64]
];

const blade = 'LineageWeapons.forgotten_blade_m00_wp';
const tex = 'LineageWeaponsTex.forgotten';
const snd = 'ItemSoun';

// Cell values by row and column; an array is [text, number of columns it runs over].
const data = {
  1: {
    AG: 'UNK_2_cn', AH: 'UNK_2_ta', AI: 'UNK_3', AJ: 'timetab', AK: 'body_part', AL: 'handness',
    AM: 'wpn_mes', AN: 'wpn_mesh[0]', AO: 'wpn_mesh[1]', AP: 'wpn_unkv', AQ: 'wpn_unkv',
    AR: 'wpn_tex_', AS: 'wpn_tex[0', AT: 'wpn_tex[1', AU: 'wpn_tex[2', AV: 'wpn_tex[3',
    AW: 'item_sour', AX: 'item_sour', AY: 'item_sour', AZ: 'item_sour', BA: 'item_sour',
    BB: 'drop_sour', '': 'equ'
  },
  3: {
    AG: 0, AI: 1, AK: 7, AL: 3, AM: 2, AN: blade, AO: blade, AP: 1, AQ: 1, AR: 2,
    AS: 'LineageW', AT: [tex, 3], AW: 4, AX: snd, AY: snd, AZ: snd, BA: snd, BB: snd, '': 'Item'
  },
  5: { AK: 14, AL: 3, AM: 2, AN: blade, AO: blade, AR: 2, AS: 'LineageW', AT: [tex, 3], AW: 0 }
};

const cornerIcon = '<svg width="11" height="11" viewBox="0 0 11 11"><path d="M11 0v11H0z" fill="#b4b4b4"/></svg>';

let html = '<colgroup><col style="width:26px">' +
  columns.map(c => `<col style="width:${c[1]}px">`).join('') + '</colgroup>';
html += '<thead><tr><th class="corner">' + cornerIcon + '</th>' +
  columns.map(c => `<th scope="col">${c[0]}</th>`).join('') + '</tr></thead><tbody>';

for (let r = 1; r <= 39; r++) {
  const row = data[r] || {};
  html += `<tr><th scope="row"${r === 1 ? ' class="sel"' : ''}>${r}</th>`;
  for (let i = 0; i < columns.length; i++) {
    const value = row[columns[i][0]];
    if (Array.isArray(value)) {
      html += `<td colspan="${value[1]}">${value[0]}</td>`;
      i += value[1] - 1;
    } else if (typeof value === 'number') {
      html += `<td class="num">${value}</td>`;
    } else {
      html += `<td>${value || ''}</td>`;
    }
  }
  html += '</tr>';
}
document.getElementById('grid').innerHTML = html + '</tbody>';
```
